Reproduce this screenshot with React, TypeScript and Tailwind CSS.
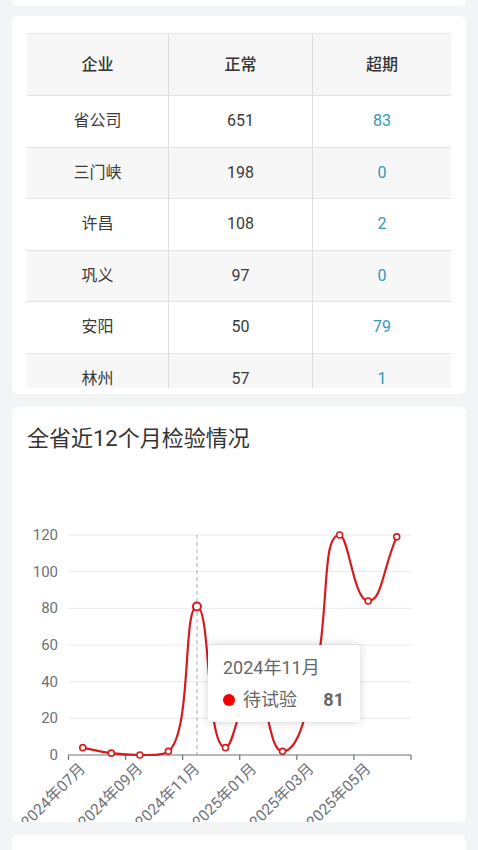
import React from "react";

const rows = [
  { name: "省公司", normal: 651, over: 83 },
  { name: "三门峡", normal: 198, over: 0 },
  { name: "许昌", normal: 108, over: 2 },
  { name: "巩义", normal: 97, over: 0 },
  { name: "安阳", normal: 50, over: 79 },
  { name: "林州", normal: 57, over: 1 },
  { name: "鹤壁", normal: 42, over: 3 },
];

const values = [4, 1, 0, 2, 81, 4, 36, 2, 33, 120, 84, 119];
const X0 = 68.5;
const X1 = 411;
const catW = (X1 - X0) / 12;
const Y0 = 755;
const scale = 220 / 120;
const pts = values.map((v, i) => [X0 + catW * (i + 0.5), Y0 - v * scale] as [number, number]);

// echarts-like smoothing with smoothConstraint
function smoothPath(p: [number, number][], smooth = 0.5) {
  const c0: [number, number][] = [];
  const c1: [number, number][] = [];
  for (let i = 0; i < p.length; i++) {
    const [x, y] = p[i];
    const [px, py] = p[i - 1] || p[i];
    const [nx, ny] = p[i + 1] || p[i];
    let vx = nx - px;
    let vy = ny - py;
    const lenPrev = Math.hypot(x - px, y - py);
    const lenNext = Math.hypot(nx - x, ny - y);
    const ratio = lenNext + lenPrev === 0 ? 0.5 : lenNext / (lenNext + lenPrev);
    let cx1 = x + vx * smooth * ratio;
    let cy1 = y + vy * smooth * ratio;
    cx1 = Math.max(Math.min(cx1, Math.max(nx, x)), Math.min(nx, x));
    cy1 = Math.max(Math.min(cy1, Math.max(ny, y)), Math.min(ny, y));
    let cx0 = x;
    let cy0 = y;
    if (lenNext > 0) {
      vx = cx1 - x;
      vy = cy1 - y;
      cx0 = x - (vx * lenPrev) / lenNext;
      cy0 = y - (vy * lenPrev) / lenNext;
    } else {
      cx0 = x - vx * smooth * (1 - ratio);
      cy0 = y - vy * smooth * (1 - ratio);
    }
    cx0 = Math.max(Math.min(cx0, Math.max(px, x)), Math.min(px, x));
    cy0 = Math.max(Math.min(cy0, Math.max(py, y)), Math.min(py, y));
    if (lenPrev > 0) {
      vx = x - cx0;
      vy = y - cy0;
      cx1 = x + (vx * lenNext) / lenPrev;
      cy1 = y + (vy * lenNext) / lenPrev;
    }
    c0.push([cx0, cy0]);
    c1.push([cx1, cy1]);
  }
  let d = `M${p[0][0]},${p[0][1]}`;
  for (let i = 0; i < p.length - 1; i++) {
    const a = c1[i];
    const b = c0[i + 1];
    d += ` C${a[0]},${a[1]} ${b[0]},${b[1]} ${p[i + 1][0]},${p[i + 1][1]}`;
  }
  return d;
}

const labels = ["2024年07月", "2024年09月", "2024年11月", "2025年01月", "2025年03月", "2025年05月"];
const yTicks = [0, 20, 40, 60, 80, 100, 120];

function Chart() {
  const path = smoothPath(pts);
  return (
    <svg width={455} height={352} className="block">
      <g transform="translate(-12,-470)">
        {yTicks.map((t) => {
          const y = Y0 - t * scale;
          return (
            <g key={t}>
              {t !== 0 && <line x1={X0} x2={X1} y1={y} y2={y} stroke="#e6e9f0" strokeWidth={1} />}
              <text
                x={58}
                y={y}
                textAnchor="end"
                dominantBaseline="central"
                fontSize={15}
                fill="#6e7079"
                fontFamily="Roboto, 'Noto Sans CJK SC', sans-serif"
              >
                {t}
              </text>
            </g>
          );
        })}
        <line x1={197} x2={197} y1={535} y2={755} stroke="#aaaaaa" strokeWidth={1} strokeDasharray="4 3" />
        <line x1={X0} x2={X1} y1={Y0} y2={Y0} stroke="#6e7079" strokeWidth={1.2} />
        {[0, 2, 4, 6, 8, 10, 12].map((k) => {
          const x = X0 + catW * k;
          return <line key={k} x1={x} x2={x} y1={Y0} y2={Y0 + 5} stroke="#6e7079" strokeWidth={1.2} />;
        })}
        {labels.map((l, i) => {
          const x = X0 + catW * (i * 2 + 0.5);
          return (
            <text
              key={l}
              x={x}
              y={766}
              textAnchor="end"
              dominantBaseline="central"
              fontSize={15.5}
              fill="#6e7079"
              fontFamily="Roboto, 'Noto Sans CJK SC', sans-serif"
              transform={`rotate(-45 ${x} 766)`}
            >
              {l}
            </text>
          );
        })}
        <path d={path} fill="none" stroke="#d41c1f" strokeWidth={2.2} />
        {pts.map((p, i) => (
          <circle
            key={i}
            cx={p[0]}
            cy={p[1]}
            r={i === 4 ? 4 : 3}
            fill="#ffffff"
            stroke="#d41c1f"
            strokeWidth={i === 4 ? 2 : 1.6}
          />
        ))}
      </g>
    </svg>
  );
}

export default function App() {
  return (
    <div
      className="min-h-screen w-full bg-[#f3f4f6] px-3 pb-10"
      style={{ fontFamily: "Roboto, 'Noto Sans CJK SC', sans-serif" }}
    >
      <div className="h-[6px] rounded-b-md bg-white" />

      <div className="mt-[10px] rounded-md bg-white px-[15px] pb-[6px] pt-[17px]">
        <div className="h-[355px] overflow-hidden">
          <div className="flex h-[62px] border-t border-[#e6e6e6] bg-[#f6f6f6] text-[16px] font-medium text-[#333]">
            <div className="flex w-[141px] items-center justify-center">企业</div>
            <div className="flex w-[144px] items-center justify-center border-l border-[#dddddd]">正常</div>
            <div className="flex flex-1 items-center justify-center border-l border-[#dddddd]">超期</div>
          </div>
          {rows.map((r, i) => (
            <div
              key={r.name}
              className={
                "flex h-[51.5px] border-t border-[#e2e2e2] text-[16px] text-[#3a3a3a] " +
                (i % 2 === 1 ? "bg-[#f7f7f7]" : "bg-white")
              }
            >
              <div className="flex w-[141px] items-center justify-center">{r.name}</div>
              <div className="flex w-[144px] items-center justify-center border-l border-[#dddddd]">{r.normal}</div>
              <div className="flex flex-1 items-center justify-center border-l border-[#dddddd] text-[#3398b8]">
                {r.over}
              </div>
            </div>
          ))}
        </div>
      </div>

      <div className="relative mt-[13px] rounded-md bg-white">
        <div className="px-[15px] pt-[17px] pb-[16px] text-[22px] leading-[30px] text-[#333]">全省近12个月检验情况</div>
        <Chart />
        <div className="absolute left-[196px] top-[238px] h-[77px] w-[152px] rounded-[4px] bg-white pl-[15px] pr-[16px] pt-[10px] shadow-[0_0_10px_rgba(0,0,0,0.18)]">
          <div className="text-[18px] leading-[26px] text-[#666]">2024年11月</div>
          <div className="mt-[6px] flex items-center text-[18px] leading-[26px] text-[#666]">
            <span className="mr-[8px] inline-block h-[12px] w-[12px] rounded-full bg-[#f00000]" />
            <span>待试验</span>
            <span className="ml-auto font-bold text-[#666]">81</span>
          </div>
        </div>
      </div>

      <div className="mt-[13px] h-[120px] rounded-md bg-white" />
    </div>
  );
}
